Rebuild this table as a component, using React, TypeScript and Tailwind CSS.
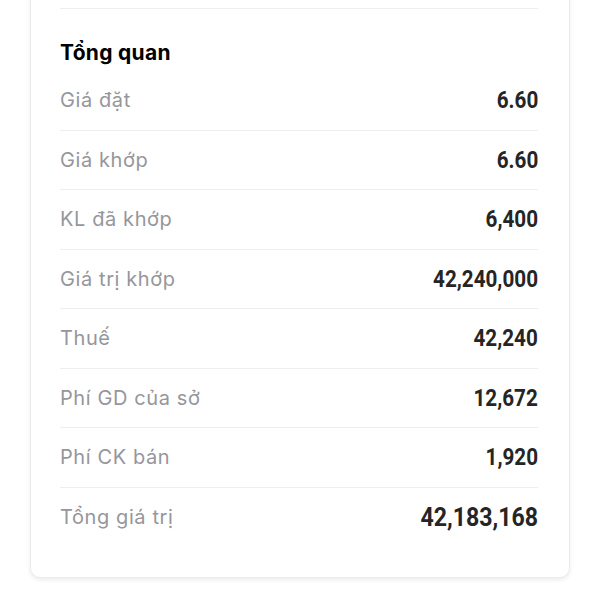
import React from 'react';

const rows = [
  { label: 'Giá đặt', value: '6.60' },
  { label: 'Giá khớp', value: '6.60' },
  { label: 'KL đã khớp', value: '6,400' },
  { label: 'Giá trị khớp', value: '42,240,000' },
  { label: 'Thuế', value: '42,240' },
  { label: 'Phí GD của sở', value: '12,672' },
  { label: 'Phí CK bán', value: '1,920' },
];

const App: React.FC = () => {
  return (
    <div className="w-[600px] h-[600px] bg-white overflow-hidden" style={{ fontFamily: 'Inter, "Noto Sans", sans-serif' }}>
      <div className="mx-[30px] -mt-[12px] bg-white rounded-[10px] border border-[#ececec] shadow-[0_2px_4px_rgba(0,0,0,0.08)] pl-[29px] pr-[31px]">
        {/* previous section ends here */}
        <div className="h-[20px] border-b border-[#eeeeee]" />

        <div className="pt-[30px] pb-[30px]">
          <h3 className="text-[21px] leading-[28px] font-bold tracking-[0.3px] text-black mb-[4px]">Tổng quan</h3>

          {rows.map((row) => (
            <div
              key={row.label}
              className="h-[59.5px] flex items-center justify-between border-b border-[#eeeeee]"
            >
              <span className="text-[20px] tracking-[0.6px] text-[#96969b]">{row.label}</span>
              <span
                className="inline-block origin-right scale-x-[0.86] text-[24px] font-bold text-[#252525]"
                style={{ fontFamily: 'Roboto, sans-serif' }}
              >
                {row.value}
              </span>
            </div>
          ))}

          <div className="h-[59.5px] flex items-center justify-between">
            <span className="text-[20px] tracking-[0.6px] text-[#96969b]">Tổng giá trị</span>
            <span
              className="inline-block origin-right scale-x-[0.89] text-[26px] font-bold text-[#252525]"
              style={{ fontFamily: 'Roboto, sans-serif' }}
            >
              42,183,168
            </span>
          </div>
        </div>
      </div>
    </div>
  );
};

export default App;
